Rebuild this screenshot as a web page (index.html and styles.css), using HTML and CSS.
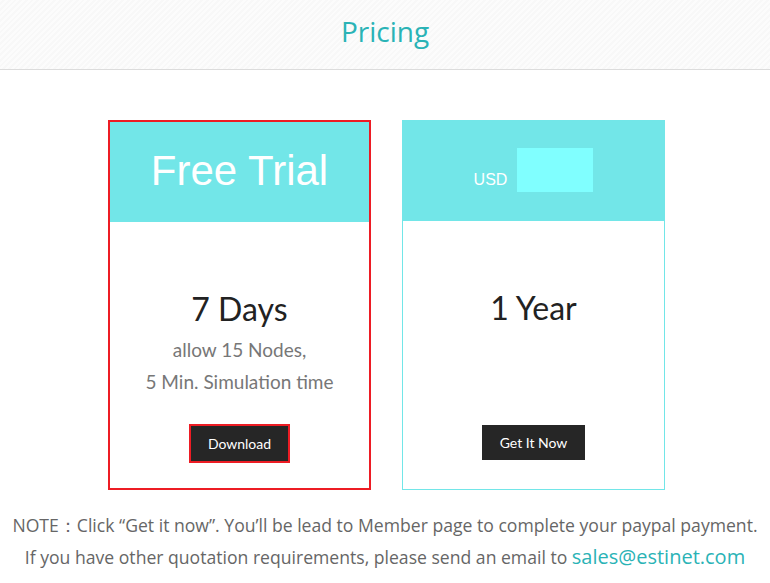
FILE: index.html
```html
<!DOCTYPE html>
<html lang="en">
<head>
    <meta charset="UTF-8">
    <meta name="viewport" content="width=device-width, initial-scale=1.0">
    <title>Pricing</title>
    <link rel="stylesheet" href="styles.css">
</head>
<body>
    <header class="page-header">
        <h1>Pricing</h1>
    </header>

    <div class="plans">
        <div class="plan selected">
            <div class="plan-head">
                <span class="plan-name">Free Trial</span>
            </div>
            <div class="plan-body">
                <h2>7 Days</h2>
                <p>allow 15 Nodes,</p>
                <p>5 Min. Simulation time</p>
                <a href="#" class="btn btn-marked">Download</a>
            </div>
        </div>

        <div class="plan">
            <div class="plan-head price-head">
                <span class="currency">USD</span>
                <span class="price-box"></span>
            </div>
            <div class="plan-body">
                <h2>1 Year</h2>
                <a href="#" class="btn">Get It Now</a>
            </div>
        </div>
    </div>

    <div class="note">
        <p>NOTE：Click “Get it now”. You’ll be lead to Member page to complete your paypal payment.</p>
        <p>If you have other quotation requirements, please send an email to <a href="#">sales@estinet.com</a></p>
    </div>
</body>
</html>
```

FILE: styles.css
```css
* {
    margin: 0;
    padding: 0;
    box-sizing: border-box;
}
body {
    background: #fff;
    font-family: "Open Sans", sans-serif;
}
.page-header {
    height: 70px;
    background: repeating-linear-gradient(135deg, #fcfcfc 0 2px, #f8f8f8 2px 4px);
    border-bottom: 1px solid #dcdcdc;
    text-align: center;
}
.page-header h1 {
    font-weight: 400;
    font-size: 28px;
    line-height: 63px;
    color: #2ab3b6;
}
.plans {
    display: flex;
    justify-content: center;
    gap: 31px;
    margin-top: 50px;
    padding-left: 3px;
}
.plan {
    width: 263px;
    height: 370px;
    border: 1px solid #72e6e8;
    display: flex;
    flex-direction: column;
}
.plan.selected {
    border: 2px solid #ed1c24;
    box-shadow: inset 1px 0 0 #fff;
}
.plan-head {
    height: 100px;
    background: #72e6e8;
    display: flex;
    justify-content: center;
    align-items: center;
    color: #fff;
}
.plan-name {
    font-family: "Liberation Sans", Arial, sans-serif;
    font-size: 42px;
    margin-top: -3px;
}
.price-head {
    align-items: flex-start;
    padding-top: 27px;
    gap: 10px;
}
.currency {
    font-family: "Liberation Sans", Arial, sans-serif;
    font-size: 16px;
    margin-top: 23px;
}
.price-box {
    width: 76px;
    height: 44px;
    background: #80ffff;
}
.plan-body {
    flex: 1;
    display: flex;
    flex-direction: column;
    align-items: center;
    padding: 67px 0 29px;
    font-family: Lato, sans-serif;
}
.selected .plan-body {
    padding-bottom: 27px;
}
.plan-body h2 {
    font-weight: 400;
    font-size: 32px;
    line-height: 40px;
    color: #222;
    margin-bottom: 5px;
}
.plan-body p {
    font-size: 19px;
    line-height: 32px;
    color: #777;
}
.btn {
    margin-top: auto;
    display: block;
    height: 35px;
    line-height: 35px;
    padding: 0 18px;
    background: #262626;
    color: #fff;
    font-size: 14px;
    text-decoration: none;
}
.btn-marked {
    padding: 0 17px;
    box-shadow: 0 0 0 2px #ed1c24;
}
.note {
    margin-top: 20px;
    text-align: center;
    color: #666;
    font-size: 17.6px;
    line-height: 31px;
}
.note a {
    color: #2ab3b6;
    font-size: 20px;
    text-decoration: none;
}
```
